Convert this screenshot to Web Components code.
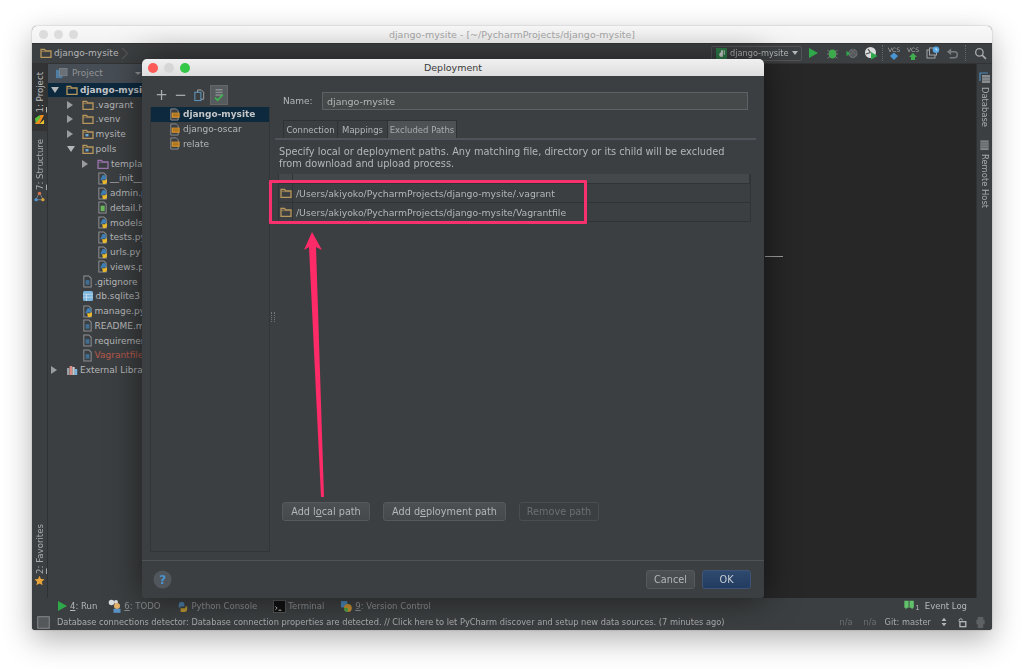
<!DOCTYPE html>
<html lang="en">
<head>
<meta charset="utf-8">
<title>Deployment</title>
<style>
  html, body { margin: 0; background: #fff; }
  body { width: 1024px; height: 669px; overflow: hidden; font: 9px "DejaVu Sans", sans-serif; color: #b4b6b8; }
  u { text-underline-offset: 1px; }
  /* the reference is a scaled-down retina capture, so everything is a little soft */
  ide-window { box-shadow: 0 10px 30px rgba(0,0,0,.3), 0 0 2px rgba(0,0,0,.25); filter: blur(.35px); }
</style>
</head>
<body>
<ide-window>
  <span slot="title">django-mysite - [~/PycharmProjects/django-mysite]</span>

  <nav-bar slot="nav"></nav-bar>

  <stripe-tab slot="left" active icon="pycharm" style="height:67px"><u>1</u>: Project</stripe-tab>
  <stripe-tab slot="left" icon="structure" style="height:70px"><u>7</u>: Structure</stripe-tab>
  <stripe-tab slot="left" icon="star" push><u>2</u>: Favorites</stripe-tab>

  <stripe-tab slot="right" side="right" icon="database" style="height:67px">Database</stripe-tab>
  <stripe-tab slot="right" side="right" icon="remote">Remote Host</stripe-tab>

  <project-panel slot="panel">
    <tree-row depth="0" arrow="down" icon="folder" selected>django-mysite</tree-row>
    <tree-row depth="1" arrow="right" icon="folder">.vagrant</tree-row>
    <tree-row depth="1" arrow="right" icon="folder">.venv</tree-row>
    <tree-row depth="1" arrow="right" icon="module">mysite</tree-row>
    <tree-row depth="1" arrow="down" icon="module">polls</tree-row>
    <tree-row depth="2" arrow="right" icon="template">templates</tree-row>
    <tree-row depth="2" icon="python">__init__.py</tree-row>
    <tree-row depth="2" icon="python">admin.py</tree-row>
    <tree-row depth="2" icon="html">detail.html</tree-row>
    <tree-row depth="2" icon="python">models.py</tree-row>
    <tree-row depth="2" icon="python">tests.py</tree-row>
    <tree-row depth="2" icon="python">urls.py</tree-row>
    <tree-row depth="2" icon="python">views.py</tree-row>
    <tree-row depth="1" icon="file">.gitignore</tree-row>
    <tree-row depth="1" icon="db">db.sqlite3</tree-row>
    <tree-row depth="1" icon="python">manage.py</tree-row>
    <tree-row depth="1" icon="file">README.md</tree-row>
    <tree-row depth="1" icon="file">requirements.txt</tree-row>
    <tree-row depth="1" icon="file" tone="#b8574a">Vagrantfile</tree-row>
    <tree-row depth="0" arrow="right" icon="library">External Libraries</tree-row>
  </project-panel>

  <tool-bar slot="tools"></tool-bar>
  <status-bar slot="status"></status-bar>

  <deployment-dialog slot="overlay"></deployment-dialog>
  <call-out slot="overlay"></call-out>
</ide-window>

<script>
const folder = (c, extra) => `<svg viewBox="0 0 12 12" width="12" height="12"><path d="M1 2.5h3.6l1 1.4H11v6.4H1z" fill="none" stroke="${c}" stroke-width="1.3"/><path d="M1.5 4.6h9" stroke="${c}" stroke-width=".6"/>${extra || ''}</svg>`;
const page = inner => `<svg viewBox="0 0 12 14" width="11" height="13"><path d="M2 1h5.5L10 3.500V13H2z" fill="#3c3f41" stroke="#8d9093" stroke-width="1.1"/>${inner}</svg>`;
const snake = `<path d="M5 5.5a2.4 2.4 0 0 1 4.8 0V8H6v1H4V7.5z" fill="#3f7fb5"/><path d="M5.5 9h3.700V8h1.700v2.800A2.200 2.200 0 0 1 8.700 13H6.500z" fill="#e9b92e"/>`;

const ICONS = {
  folder: folder('#b8975c'),
  module: folder('#b8975c', '<rect x="3.5" y="6" width="3" height="2.4" fill="#6aa6d6"/>'),
  template: folder('#9a74ad'),
  python: page(snake),
  html: page('<rect x="4" y="5" width="4.4" height="6" fill="#6bb85a"/>'),
  file: page('<rect x="4" y="5.5" width="4" height="5" fill="#3f6f94"/>'),
  db: `<svg viewBox="0 0 12 12" width="12" height="12"><rect x="1" y="1" width="10" height="10" rx="1.5" fill="#7cb4dd"/><path d="M1 4.2h10M1 7.2h10M4.5 4v7" stroke="#d3e6f3" stroke-width=".7"/></svg>`,
  library: `<svg viewBox="0 0 12 12" width="12" height="12"><rect x="1" y="4" width="2.5" height="7" fill="#9aa0a5"/><rect x="3.6" y="2" width="2.7" height="9" fill="#d98a82"/><rect x="6.4" y="3" width="2.3" height="8" fill="#c9ccce"/><rect x="8.8" y="5" width="2.4" height="6" fill="#7cb4dd"/></svg>`,
  pycharm: `<svg viewBox="0 0 12 12" width="11" height="11"><rect x="1" y="1" width="10" height="10" fill="#2d2f30"/><path d="M1 11 7 1h4L6 11z" fill="#f18a1c"/><path d="M1 5l5-4 1 3-5 6z" fill="#5fbe3c"/><path d="M6 11l5-5v5z" fill="#e8c22c"/></svg>`,
  structure: `<svg viewBox="0 0 12 12" width="11" height="11"><path d="M6 2 2 9.5h8z" fill="none" stroke="#8c9094" stroke-width=".8"/><circle cx="6" cy="2.5" r="1.8" fill="#d9734c"/><circle cx="2.3" cy="9.5" r="1.8" fill="#4f94cd"/><circle cx="9.7" cy="9.5" r="1.8" fill="#d9a23c"/></svg>`,
  star: `<svg viewBox="0 0 12 12" width="11" height="11"><path d="M6 .8l1.6 3.5 3.800.4-2.800 2.600.8 3.800L6 9.200l-3.400 1.900.8-3.800L.6 4.700l3.800-.4z" fill="#e8a33a"/></svg>`,
  database: `<svg viewBox="0 0 12 12" width="12" height="12"><path d="M1 9V1h8" fill="none" stroke="#4a8bbd" stroke-width="1.2"/><rect x="3" y="3" width="8" height="8" fill="#8a8d90"/><path d="M3 5.7h8M3 8.3h8" stroke="#5c5f62" stroke-width=".6"/></svg>`,
  remote: `<svg viewBox="0 0 12 12" width="11" height="12"><rect x="1.5" y="1" width="9" height="10.5" fill="#85888a"/><path d="M1.5 3h9M1.5 5h9M1.5 7h9M1.5 9h9" stroke="#4b4e50" stroke-width=".7"/></svg>`,
  deploy: `<svg viewBox="0 0 14 14" width="13" height="13"><path d="M3 1h6l2 2v10H3z" fill="#3c3f41" stroke="#8d9093"/><rect x="4" y="5" width="8.5" height="5.5" fill="#e29a2e"/><path d="M5 6.5h6.5M5 8.500h6.500" stroke="#6f4a12" stroke-width=".8"/></svg>`,
  copy: `<svg viewBox="0 0 14 14" width="13" height="13"><rect x="2" y="3.5" width="6.5" height="9" fill="#3c3f41" stroke="#5f9fca"/><path d="M5 3.5V1h4l2.500 2.500V11H8.500" fill="none" stroke="#a3a6a8"/></svg>`,
  defaults: `<svg viewBox="0 0 16 16" width="14" height="14"><path d="M4 2h8M4 5h8M4 8h8" stroke="#8a8d8f" stroke-width="1.5"/><path d="M3.5 11l3 3 6-6.500" fill="none" stroke="#3fb34f" stroke-width="2"/></svg>`,
  play: `<svg viewBox="0 0 12 12" width="12" height="12"><path d="M2 1l9 5-9 5z" fill="#2fa84a"/></svg>`,
  bug: `<svg viewBox="0 0 14 14" width="13" height="13"><ellipse cx="7" cy="7.5" rx="4" ry="4.8" fill="#3cab4c"/><path d="M1.5 3.5l3 2M12.500 3.500l-3 2M1 7.500h2.500M13 7.500h-2.500M1.500 12l3-2M12.500 12l-3-2" stroke="#7d8083" stroke-width="1"/></svg>`,
  coverage: `<svg viewBox="0 0 14 14" width="14" height="13"><circle cx="8" cy="7" r="5" fill="#6b6e70"/><path d="M4.5 3.5l7 7M7 2l5 5M4 6l5 5M11.500 3.500l-7 7M9 2l-5 5M12 6l-5 5" stroke="#45484a" stroke-width=".8"/><path d="M1 4l4 3-4 3z" fill="#2fa84a"/></svg>`,
  profile: `<svg viewBox="0 0 14 14" width="14" height="14"><circle cx="6.5" cy="6.5" r="5.5" fill="#d9dadb"/><path d="M6.5 6.5 4 3M6.500 6.500 2 8" stroke="#4b4e50" stroke-width="1.2"/><path d="M7 6l6.500 4L7 13.500z" fill="#2fa84a"/></svg>`,
  update: `<svg viewBox="0 0 16 16" width="16" height="16"><text x="8" y="6.5" text-anchor="middle" font-family="DejaVu Sans" font-size="6" fill="#a9abad">VCS</text><path d="M8 15l4-4-4-3.500L4 11z" fill="#4a94cf"/></svg>`,
  commit: `<svg viewBox="0 0 16 16" width="16" height="16"><text x="8" y="6.5" text-anchor="middle" font-family="DejaVu Sans" font-size="6" fill="#a9abad">VCS</text><path d="M8 8l4 4h-2v3H6v-3H4z" fill="#3fae4e"/></svg>`,
  history: `<svg viewBox="0 0 14 14" width="14" height="14"><rect x="1" y="4" width="8" height="8" fill="none" stroke="#a3a6a8"/><rect x="3.5" y="2" width="7" height="7" fill="#3c3f41" stroke="#a3a6a8"/><circle cx="10" cy="3.8" r="3.3" fill="#58a7e0"/><path d="M10 2v2h1.500" fill="none" stroke="#fff" stroke-width=".7"/></svg>`,
  undo: `<svg viewBox="0 0 14 14" width="13" height="13"><path d="M3.5 5H9a3 3 0 0 1 0 6.500H4" fill="none" stroke="#7a7d80" stroke-width="1.6"/><path d="M5.5 1.5v7L1 5z" fill="#7a7d80"/></svg>`,
  search: `<svg viewBox="0 0 14 14" width="13" height="13"><circle cx="5.8" cy="5.8" r="4" fill="none" stroke="#a9abad" stroke-width="1.4"/><path d="M8.8 8.8l4 4" stroke="#a9abad" stroke-width="1.8"/></svg>`,
  todo: `<svg viewBox="0 0 14 14" width="14" height="14"><circle cx="3.5" cy="3.5" r="2.8" fill="#d9dadb"/><circle cx="8" cy="3" r="2" fill="#d9dadb"/><circle cx="9" cy="7" r="3" fill="#e6b26a"/><rect x="5.5" y="9.8" width="7" height="4" fill="#5a93c6"/></svg>`,
  console: `<svg viewBox="0 0 14 14" width="13" height="13"><path d="M3 5a3 3 0 0 1 6 0v2H5v1H3z" fill="#4c7ea6"/><path d="M5 9h5V7h2v3.500A3 3 0 0 1 9 13H5z" fill="#b8962f"/></svg>`,
  terminal: `<svg viewBox="0 0 14 14" width="13" height="13"><rect x=".5" y=".5" width="13" height="13" fill="#111" stroke="#55585a"/><path d="M2.5 7l2 1.800-2 1.800" fill="none" stroke="#ddd" stroke-width=".9"/><path d="M6 11h3" stroke="#ddd"/></svg>`,
  vcs: `<svg viewBox="0 0 14 14" width="13" height="13"><rect x="1" y="1" width="7" height="7" rx="1" fill="#4a87b8"/><circle cx="8.5" cy="8.5" r="4.2" fill="#c79030"/><path d="M4.3 8.5a4.200 4.200 0 0 0 4.200 4.200V8.500z" fill="#4da348"/></svg>`,
  log: `<svg viewBox="0 0 14 14" width="13" height="12"><path d="M1 1h5v8H4l-1 2-1-2H1z" fill="#62c26b"/><path d="M7 1h5v8h-1l-1 2-1-2H7z" fill="#62c26b"/></svg>`,
  django: `<svg viewBox="0 0 12 12" width="11" height="11"><rect width="12" height="12" fill="#2f7d49"/><path d="M5.5 2.5h2v7c-2 .4-4 .2-4-2.200 0-2 1.500-2.600 2-2.400z" fill="#d5d8d6"/><path d="M9 2.5v5" stroke="#d5d8d6"/></svg>`,
  view: `<svg viewBox="0 0 14 14" width="13" height="13"><rect x="1" y="3" width="7" height="9" fill="#4f7da3"/><rect x="5" y="1.5" width="8" height="8" fill="#6a7076" stroke="#8a9096" stroke-width=".6"/></svg>`,
  lock: `<svg viewBox="0 0 12 12" width="10" height="11"><path d="M2.5 5V3.500a2 2 0 0 1 4 0" fill="none" stroke="#b4b6b8" stroke-width="1.2"/><rect x="3.5" y="5" width="7" height="6" fill="none" stroke="#b4b6b8" stroke-width="1.6"/></svg>`,
  hector: `<svg viewBox="0 0 12 14" width="11" height="13"><path d="M3 1h6v3h1.500v5H9v4H3V9H1.500V4H3z" fill="#5e6163"/></svg>`,
  frame: `<svg viewBox="0 0 14 14" width="13" height="13"><rect x=".8" y=".8" width="12.4" height="12.4" fill="#55585a" stroke="#8b8e90"/></svg>`,
  sort: `<svg viewBox="0 0 6 10" width="6" height="10"><path d="M3 .8 5.500 4h-5zM3 9.200.5 6h5z" fill="#b4b6b8"/></svg>`,
  help: `<svg viewBox="0 0 20 20" width="19" height="19"><circle cx="10" cy="10" r="9.5" fill="#50565b"/><text x="10" y="14.5" text-anchor="middle" font-family="DejaVu Sans" font-weight="bold" font-size="13" fill="#4a94cf">?</text></svg>`
};

class AppIcon extends HTMLElement {
  connectedCallback() {
    const root = this.shadowRoot || this.attachShadow({mode: 'open'});
    root.innerHTML = `<style>:host{display:inline-flex;align-items:center;justify-content:center;flex:none}svg{display:block}</style>${ICONS[this.getAttribute('name')] || ''}`;
  }
}
customElements.define('app-icon', AppIcon);

class IdeWindow extends HTMLElement {
  constructor() {
    super();
    this.attachShadow({mode: 'open'}).innerHTML = `
      <style>
        :host { display: block; position: absolute; left: 32px; top: 26px; width: 960px; height: 604px; border-radius: 5px 5px 3px 3px; }
        .frame { position: relative; display: grid; grid-template-rows: 17px 21px 1fr; height: 100%; background: #3c3f41;
          border-radius: inherit; overflow: hidden; }
        .title { display: flex; align-items: center; justify-content: center; position: relative;
          background: linear-gradient(#f8f8f8, #f2f2f2); color: #a8a8a8; font-size: 9.5px; }
        .lights { position: absolute; left: 7px; top: 4px; display: flex; gap: 6px; }
        .lights i { width: 9px; height: 9px; border-radius: 50%; background: #dcdcdc; }
        .main { display: grid; grid-template-columns: 16px 260px 1fr 16px; grid-template-rows: 1fr 16px 16px; min-height: 0; }
        .left, .right { display: flex; flex-direction: column; border-right: 1px solid #2f3133; }
        .right { border-right: 0; border-left: 1px solid #2f3133; }
        .panel { min-height: 0; overflow: hidden; border-right: 1px solid #2f3133; }
        .editor { position: relative; background: #272727; }
        .editor::after { content: ""; position: absolute; left: 457px; top: 192px; width: 18px; height: 1px; background: #a0a0a0; }
        .tools, .status { grid-column: 1 / -1; }
      </style>
      <div class="frame">
        <div class="title"><div class="lights"><i></i><i></i><i></i></div><slot name="title"></slot></div>
        <slot name="nav"></slot>
        <div class="main">
          <div class="left"><slot name="left"></slot></div>
          <div class="panel"><slot name="panel"></slot></div>
          <div class="editor"></div>
          <div class="right"><slot name="right"></slot></div>
          <div class="tools"><slot name="tools"></slot></div>
          <div class="status"><slot name="status"></slot></div>
        </div>
        <slot name="overlay"></slot>
      </div>`;
  }
}
customElements.define('ide-window', IdeWindow);

class NavBar extends HTMLElement {
  constructor() {
    super();
    this.attachShadow({mode: 'open'}).innerHTML = `
      <style>
        :host { display: flex; align-items: center; height: 21px; padding: 0 0 1px 8px; box-sizing: border-box; background: #3c3f41;
          border-top: 1px solid #333; border-bottom: 1px solid #333; font: 9px "DejaVu Sans", sans-serif; color: #b4b6b8; white-space: nowrap; }
        .crumb { margin-left: 2px; }
        .sep { width: 6px; height: 6px; margin-left: 1px; border-top: 1px solid #555; border-right: 1px solid #555; transform: rotate(45deg) scale(1.2); }
        .run { display: flex; align-items: center; gap: 3px; height: 15px; width: 91px; box-sizing: border-box; margin-left: auto; padding: 0 4px; border: 1px solid #555; border-radius: 2px; font-size: 8.2px; }
        .run b { margin-left: auto; border: 3px solid transparent; border-top: 4px solid #b4b6b8; border-bottom: 0; }
        .icons { display: flex; align-items: center; margin-left: 1px; }
        .icons app-icon { width: 19.5px; }
        .rule { width: 1px; height: 16px; margin: 0 1px; border-left: 1px dotted #666; box-sizing: border-box; }
        .icons .find { width: 26px; padding-left: 3px; box-sizing: border-box; }
      </style>
      <app-icon name="folder"></app-icon><span class="crumb">django-mysite</span><span class="sep"></span>
      <div class="run"><app-icon name="django"></app-icon><span>django-mysite</span><b></b></div>
      <div class="icons">
        <app-icon name="play"></app-icon><app-icon name="bug"></app-icon><app-icon name="coverage"></app-icon><app-icon name="profile"></app-icon>
        <span class="rule"></span>
        <app-icon name="update"></app-icon><app-icon name="commit"></app-icon><app-icon name="history"></app-icon><app-icon name="undo"></app-icon>
        <span class="rule" style="margin:0 0 0 3px"></span>
        <app-icon class="find" name="search"></app-icon>
      </div>`;
  }
}
customElements.define('nav-bar', NavBar);

class StripeTab extends HTMLElement {
  connectedCallback() {
    const right = this.getAttribute('side') === 'right';
    const root = this.shadowRoot || this.attachShadow({mode: 'open'});
    root.innerHTML = `
      <style>
        :host { display: flex; flex-direction: ${right ? 'column' : 'column-reverse'}; align-items: center; justify-content: ${right ? 'flex-start' : 'flex-end'};
          gap: ${right ? 3 : 1}px; padding: ${right ? '8px 0 0' : '8px 0 3px'}; box-sizing: border-box; font: ${right ? 8.4 : 8.6}px "DejaVu Sans", sans-serif; color: #a9abad; }
        :host([active]) { background: #313335; color: #bbb; }
        :host([push]) { margin-top: auto; justify-content: flex-start; padding: 0 0 12px; }
        span { writing-mode: vertical-rl; white-space: nowrap; ${right ? '' : 'transform: rotate(180deg);'} }
      </style>
      <app-icon name="${this.getAttribute('icon')}"></app-icon><span><slot></slot></span>`;
  }
}
customElements.define('stripe-tab', StripeTab);

class ProjectPanel extends HTMLElement {
  constructor() {
    super();
    this.attachShadow({mode: 'open'}).innerHTML = `
      <style>
        :host { display: block; height: 100%; background: #3c3f41; font: 9px "DejaVu Sans", sans-serif; color: #b4b6b8; }
        .head { display: flex; align-items: center; gap: 4px; height: 18.5px; padding-left: 7px; background: #474d54; color: #909396; }
        .head b { margin-left: 28px; border: 3px solid transparent; border-top: 3px solid #909396; border-bottom: 0; }
      </style>
      <div class="head"><app-icon name="view"></app-icon><span>Project</span><b></b></div>
      <slot></slot>`;
  }
}
customElements.define('project-panel', ProjectPanel);

class TreeRow extends HTMLElement {
  connectedCallback() {
    const depth = Number(this.getAttribute('depth') || 0);
    const arrow = this.getAttribute('arrow');
    const tone = this.getAttribute('tone');
    const glyph = arrow === 'down' ? 'border-width:6px 4px 0;border-color:#b4b6b8 transparent transparent'
      : arrow === 'right' ? 'border-width:4px 0 4px 6px;border-color:transparent transparent transparent #9a9c9e' : 'border-width:0';
    const root = this.shadowRoot || this.attachShadow({mode: 'open'});
    root.innerHTML = `
      <style>
        :host { display: flex; align-items: center; height: 14.75px; padding-left: ${3 + depth * 15.5}px; white-space: nowrap; ${tone ? 'color:' + tone + ';' : ''} }
        :host([selected]) { background: #0d293e; font-weight: bold; color: #c4c6c8; }
        .arrow { width: 15px; flex: none; }
        .arrow i { display: block; width: 0; height: 0; border-style: solid; ${glyph} }
        .label { margin-left: 2px; }
      </style>
      <span class="arrow"><i></i></span><app-icon name="${this.getAttribute('icon')}"></app-icon><span class="label"><slot></slot></span>`;
  }
}
customElements.define('tree-row', TreeRow);

class ToolBar extends HTMLElement {
  constructor() {
    super();
    this.attachShadow({mode: 'open'}).innerHTML = `
      <style>
        :host { display: flex; align-items: center; height: 16px; padding-left: 24px; background: #3c3f41; font: 8.5px "DejaVu Sans", sans-serif; color: #8b8e91; }
        div { display: flex; align-items: center; gap: 2px; margin-right: 16px; white-space: nowrap; }
        .on { color: #b4b6b8; margin-right: 11px; }
        .log { margin: 0 25px 0 auto; color: #b4b6b8; }
        .log sub { font-size: 7px; line-height: 0; margin: 4px 3px 0 -3px; }
      </style>
      <div class="on"><app-icon name="play"></app-icon><span><u>4</u>: Run</span></div>
      <div><app-icon name="todo"></app-icon><span><u>6</u>: TODO</span></div>
      <div><app-icon name="console"></app-icon><span>Python Console</span></div>
      <div><app-icon name="terminal"></app-icon><span>Terminal</span></div>
      <div><app-icon name="vcs"></app-icon><span><u>9</u>: Version Control</span></div>
      <div class="log"><app-icon name="log"></app-icon><sub>1</sub><span>Event Log</span></div>`;
  }
}
customElements.define('tool-bar', ToolBar);

class StatusBar extends HTMLElement {
  constructor() {
    super();
    this.attachShadow({mode: 'open'}).innerHTML = `
      <style>
        :host { display: flex; align-items: center; height: 16px; padding: 0 6px 0 5px; background: #3c3f41; font: 8.25px "DejaVu Sans", sans-serif; color: #a9abad; white-space: nowrap; }
        .msg { margin-left: 7px; }
        .dim { color: #6c6f72; margin-left: 11px; }
        .git { margin-left: 8px; }
        .sort { margin: 0 10px 0 10px; }
        .push { margin-left: auto; }
      </style>
      <app-icon name="frame"></app-icon>
      <span class="msg">Database connections detector: Database connection properties are detected. // Click here to let PyCharm discover and setup new data sources. (7 minutes ago)</span>
      <span class="dim push">n/a</span><span class="dim">n/a</span><span class="git">Git: master</span><app-icon class="sort" name="sort"></app-icon>
      <app-icon name="lock"></app-icon><app-icon name="hector" style="margin-left:8px"></app-icon>`;
  }
}
customElements.define('status-bar', StatusBar);

class DialogButton extends HTMLElement {
  constructor() {
    super();
    this.attachShadow({mode: 'open'}).innerHTML = `
      <style>
        :host { display: inline-flex; align-items: center; justify-content: center; box-sizing: border-box; height: 19px; border: 1px solid #55595b; border-radius: 3px;
          background: linear-gradient(#4c5052, #45494b); color: #b4b6b8; font: 9.7px "DejaVu Sans", sans-serif; white-space: nowrap; }
        :host([primary]) { background: linear-gradient(#2f4a6e, #223b60); border-color: #3d5478; color: #c6ccd4; }
        :host([disabled]) { background: none; border-color: #4b4e50; color: #6c6f72; }
      </style><slot></slot>`;
  }
}
customElements.define('dialog-button', DialogButton);

class DeploymentDialog extends HTMLElement {
  constructor() {
    super();
    const folderIcon = '<app-icon name="folder"></app-icon>';
    this.attachShadow({mode: 'open'}).innerHTML = `
      <style>
        :host { position: absolute; left: 110px; top: 33px; width: 622px; height: 539px; display: flex; flex-direction: column;
          background: #3c3f41; border-radius: 5px 5px 3px 3px; overflow: hidden; box-shadow: 0 0 34px rgba(0,0,0,.55);
          font: 9px "DejaVu Sans", sans-serif; color: #b4b6b8; }
        .bar { position: relative; height: 17px; flex: none; display: flex; align-items: center; justify-content: center;
          background: linear-gradient(#f0f0f0, #dedede); color: #3a3a3a; font-size: 9.5px; }
        .lights { position: absolute; left: 6px; top: 4px; display: flex; gap: 6px; }
        .lights i { width: 10px; height: 10px; border-radius: 50%; }
        .content { flex: 1; display: flex; min-height: 0; }
        .side { width: 128px; flex: none; padding: 9px 0 8px 8px; box-sizing: border-box; display: flex; flex-direction: column; }
        .actions { display: flex; align-items: center; height: 20px; margin-bottom: 2px; padding-left: 5px; gap: 6px; }
        .actions span { width: 13px; text-align: center; font-size: 15px; line-height: 20px; color: #a9abad; }
        .actions .toggled { width: 18px; height: 20px; margin-left: -2px; display: flex; align-items: center; justify-content: center; background: #565b5d; border: 1px solid #666; box-sizing: border-box; }
        .list { flex: 1; border: 1px solid #333638; border-top: 0; }
        .item { display: flex; align-items: center; gap: 2px; height: 14.75px; padding-left: 17px; white-space: nowrap; }
        .item.sel { background: #0d293e; font-weight: bold; color: #c4c6c8; }
        .split { width: 5px; flex: none; display: flex; align-items: center; justify-content: center; }
        .split i { width: 2px; height: 10px; border-left: 1px dotted #777; border-right: 1px dotted #777; position: relative; top: -1px; }
        .form { flex: 1; min-width: 0; padding: 16px 8px 39px 0; display: flex; flex-direction: column; }
        .name { display: flex; align-items: center; height: 18px; padding: 0 8px; }
        .name label { width: 39px; }
        .name div { flex: 1; height: 100%; box-sizing: border-box; padding-left: 4px; display: flex; align-items: center; border: 1px solid #5f6265; background: #45494a; font-size: 9.5px; }
        .tabs { display: flex; height: 18px; margin: 10px 0 0 8px; font-size: 8.5px; }
        .tabs span { display: flex; align-items: center; justify-content: center; box-sizing: border-box; border: 1px solid #2f3133; border-bottom: 0; margin-right: -1px; color: #b4b6b8; white-space: nowrap; }
        .tabs .on { background: #4e5254; color: #a9abad; }
        .rule { height: 2px; background: #50545a; flex: none; }
        .desc { margin: 6px 0 0 4px; line-height: 12px; font-size: 9.8px; width: 470px; }
        .table { width: 473px; margin: 4px 0 0 3px; border: 1px solid #313335; box-sizing: border-box; border-top: 0; }
        .thead { display: grid; grid-template-columns: 14px 1fr; height: 10px; box-sizing: border-box; background: #45484a; border-bottom: 1px solid #313335; }
        .thead i { border-right: 1px solid #313335; }
        .row { display: grid; grid-template-columns: 14px 1fr; height: 19px; box-sizing: border-box; border-bottom: 1px solid #313335; align-items: center; }
        .row:last-child { border-bottom: 0; height: 18px; }
        .row app-icon { height: 100%; border-right: 1px solid #313335; }
        .row span { padding-left: 3px; font-size: 9.25px; }
        .buttons { display: flex; gap: 13px; margin: auto 0 0 7px; }
        .foot { height: 38px; flex: none; box-sizing: border-box; border-top: 1px solid #505354; display: flex; align-items: center; gap: 7px; padding: 0 13px 0 11px; }
        .foot .help { margin-right: auto; }
      </style>
      <div class="bar"><div class="lights"><i style="background:#fc5b57"></i><i style="background:#d6d6d6"></i><i style="background:#34c748"></i></div>Deployment</div>
      <div class="content">
        <div class="side">
          <div class="actions"><span>+</span><span>&#8722;</span><app-icon name="copy"></app-icon><div class="toggled"><app-icon name="defaults"></app-icon></div></div>
          <div class="list">
            <div class="item sel"><app-icon name="deploy"></app-icon>django-mysite</div>
            <div class="item"><app-icon name="deploy"></app-icon>django-oscar</div>
            <div class="item"><app-icon name="deploy"></app-icon>relate</div>
          </div>
        </div>
        <div class="split"><i></i></div>
        <div class="form">
          <div class="name"><label>Name:</label><div>django-mysite</div></div>
          <div class="tabs">
            <span style="width:55px">Connection</span><span style="width:51px">Mappings</span><span class="on" style="width:70px">Excluded Paths</span>
          </div>
          <div class="rule"></div>
          <div class="desc">Specify local or deployment paths. Any matching file, directory or its child will be excluded from download and upload process.</div>
          <div class="table">
            <div class="thead"><i></i><i></i></div>
            <div class="row">${folderIcon}<span>/Users/akiyoko/PycharmProjects/django-mysite/.vagrant</span></div>
            <div class="row">${folderIcon}<span>/Users/akiyoko/PycharmProjects/django-mysite/Vagrantfile</span></div>
          </div>
          <div class="buttons">
            <dialog-button style="width:88px">Add l<u>o</u>cal path</dialog-button>
            <dialog-button style="width:123px">Add d<u>e</u>ployment path</dialog-button>
            <dialog-button disabled style="width:80px">Remove path</dialog-button>
          </div>
        </div>
      </div>
      <div class="foot">
        <app-icon class="help" name="help"></app-icon>
        <dialog-button style="width:49px">Cancel</dialog-button>
        <dialog-button primary style="width:49px">OK</dialog-button>
      </div>`;
  }
}
customElements.define('deployment-dialog', DeploymentDialog);

// hand-drawn annotation on top of the screenshot, coordinates are relative to the window
class CallOut extends HTMLElement {
  constructor() {
    super();
    this.attachShadow({mode: 'open'}).innerHTML = `
      <style>
        :host { position: absolute; inset: 0; pointer-events: none; }
        .box { position: absolute; left: 237px; top: 154px; width: 318px; height: 44px; box-sizing: border-box; border: 3px solid #f8306e; border-radius: 1px; }
        svg { position: absolute; left: 0; top: 0; }
      </style>
      <div class="box"></div>
      <svg width="960" height="604" viewBox="32 26 960 604"><polygon points="312,232 322,250 316,247 324,497 321,497 309,247 304,250" fill="#ff2a68"/></svg>`;
  }
}
customElements.define('call-out', CallOut);
</script>
</body>
</html>
